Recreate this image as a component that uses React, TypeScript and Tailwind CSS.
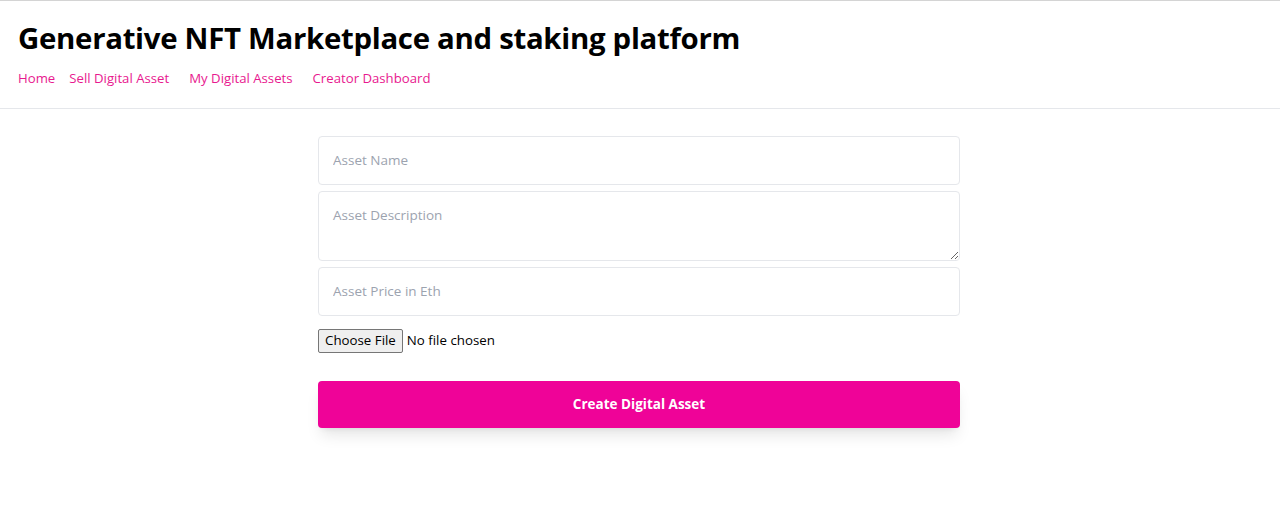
import React from "react";

export default function App() {
  return (
    <div className="min-h-[522px] w-full bg-white border-t border-[#d4d4d4]" style={{ fontFamily: '"Open Sans", "Noto Sans", sans-serif' }}>
      <nav className="border-b border-[#e5e7eb] pl-[18px] pt-[18px] h-[108px]">
        <h1 className="text-[29.4px] leading-[38px] font-bold text-black tracking-[-0.3px]">
          Generative NFT Marketplace and staking platform
        </h1>
        <div className="flex mt-[11px] text-[13.2px] leading-[20px] text-[#e8198f]">
          <a className="mr-[14px]">Home</a>
          <a className="mr-[20px]">Sell Digital Asset</a>
          <a className="mr-[20px]">My Digital Assets</a>
          <a>Creator Dashboard</a>
        </div>
      </nav>
      <div className="flex justify-center pr-[2px]">
        <div className="w-[642px] flex flex-col pt-[27px] pb-12">
          <input
            placeholder="Asset Name"
            className="h-[49px] border border-[#e5e7eb] rounded px-[14px] pb-[1px] text-[13.5px] placeholder:text-[#9ca3af] outline-none"
          />
          <textarea
            placeholder="Asset Description"
            className="mt-[6px] h-[70px] border border-[#e5e7eb] rounded px-[14px] pt-[13px] text-[13.5px] placeholder:text-[#9ca3af] outline-none"
          />
          <input
            placeholder="Asset Price in Eth"
            className="mt-[6px] h-[49px] border border-[#e5e7eb] rounded px-[14px] pb-[1px] text-[13.5px] placeholder:text-[#9ca3af] outline-none"
          />
          <input type="file" className="mt-[13px] text-[13.3px] text-black w-[300px] file:mr-[4px] file:px-[6px] file:py-[1px] file:border file:border-[#767676] file:rounded-[2px] file:bg-[#efefef] file:text-[13.3px]" />
          <button className="mt-[28px] h-[47px] rounded bg-[#ef0398] text-white text-[13.5px] font-bold shadow-lg">
            Create Digital Asset
          </button>
        </div>
      </div>
    </div>
  );
}
